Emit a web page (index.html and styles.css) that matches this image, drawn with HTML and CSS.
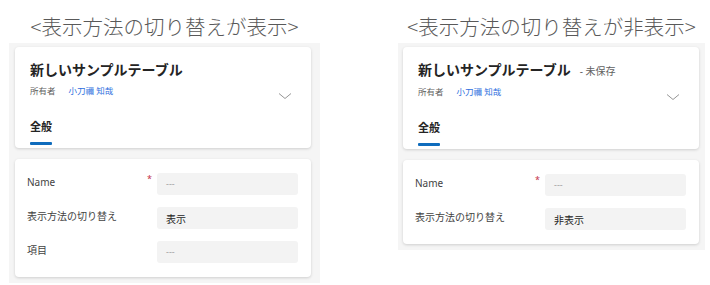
FILE: index.html
```html
<!DOCTYPE html>
<html lang="ja">
<head>
    <meta charset="UTF-8">
    <meta name="viewport" content="width=device-width, initial-scale=1.0">
    <title>表示方法の切り替え</title>
    <link rel="stylesheet" href="styles.css">
</head>
<body>
    <!-- 表示 -->
    <div class="column column-left">
        <h2 class="caption">&lt;表示方法の切り替えが表示&gt;</h2>
        <div class="panel">
            <div class="card head-card">
                <div class="head-top">
                    <div class="head-info">
                        <h1 class="record-title">新しいサンプルテーブル</h1>
                        <div class="owner-row">
                            <span class="owner-label">所有者</span>
                            <span class="owner-name">小刀禰 知哉</span>
                        </div>
                    </div>
                    <svg class="chevron" width="14" height="8" viewBox="0 0 14 8">
                        <path d="M1 1.5 L7 6.5 L13 1.5" fill="none" stroke="#8a8a8a" stroke-width="0.9"/>
                    </svg>
                </div>
                <div class="tabs">
                    <div class="tab tab-active">全般</div>
                </div>
            </div>
            <div class="card form-card">
                <div class="form-row">
                    <div class="field-label">Name <span class="required">*</span></div>
                    <div class="field-box placeholder">---</div>
                </div>
                <div class="form-row">
                    <div class="field-label">表示方法の切り替え</div>
                    <div class="field-box value">表示</div>
                </div>
                <div class="form-row">
                    <div class="field-label">項目</div>
                    <div class="field-box placeholder">---</div>
                </div>
            </div>
        </div>
    </div>

    <!-- 非表示 -->
    <div class="column column-right">
        <h2 class="caption">&lt;表示方法の切り替えが非表示&gt;</h2>
        <div class="panel">
            <div class="card head-card">
                <div class="head-top">
                    <div class="head-info">
                        <h1 class="record-title">新しいサンプルテーブル<span class="unsaved">- 未保存</span></h1>
                        <div class="owner-row">
                            <span class="owner-label">所有者</span>
                            <span class="owner-name">小刀禰 知哉</span>
                        </div>
                    </div>
                    <svg class="chevron" width="14" height="8" viewBox="0 0 14 8">
                        <path d="M1 1.5 L7 6.5 L13 1.5" fill="none" stroke="#8a8a8a" stroke-width="0.9"/>
                    </svg>
                </div>
                <div class="tabs">
                    <div class="tab tab-active">全般</div>
                </div>
            </div>
            <div class="card form-card">
                <div class="form-row">
                    <div class="field-label">Name <span class="required">*</span></div>
                    <div class="field-box placeholder">---</div>
                </div>
                <div class="form-row">
                    <div class="field-label">表示方法の切り替え</div>
                    <div class="field-box value">非表示</div>
                </div>
            </div>
        </div>
    </div>
</body>
</html>
```

FILE: styles.css
```css
body {
    margin: 0;
    padding: 0 0 0 9px;
    display: flex;
    gap: 78px;
    background: #ffffff;
    font-family: "Noto Sans", "Noto Sans CJK JP", sans-serif;
    color: #242424;
}

/* Columns */
.column {
    padding-top: 11px;
}

.column-left {
    width: 311px;
}

.column-right {
    width: 307px;
}

.caption {
    margin: 0 0 2px;
    height: 30px;
    line-height: 30px;
    font-size: 20.5px;
    font-weight: 300;
    color: #595959;
    text-align: center;
    white-space: nowrap;
    font-family: "Noto Sans CJK JP", sans-serif;
}

/* Gray background panel */
.panel {
    background: #f5f5f5;
    padding: 4px 9px 6px 6px;
    display: flex;
    flex-direction: column;
    gap: 11px;
}

.column-right .panel {
    padding: 4px 6px 6px 5px;
}

.card {
    background: #ffffff;
    border-radius: 4px;
    box-shadow: 0 1px 3px rgba(0, 0, 0, 0.16);
}

/* Header card */
.head-card {
    padding: 13px 19px 3px 15px;
}

.head-top {
    display: flex;
    justify-content: space-between;
}

.record-title {
    margin: 0;
    font-size: 14px;
    line-height: 20px;
    font-weight: 700;
    color: #242424;
    white-space: nowrap;
}

.unsaved {
    margin-left: 9px;
    font-size: 10px;
    font-weight: 400;
    color: #616161;
}

.owner-row {
    margin-top: 4px;
    display: flex;
    gap: 13px;
    font-size: 8.5px;
    line-height: 14px;
}

.owner-label {
    color: #616161;
}

.owner-name {
    color: #2f6fde;
}

.chevron {
    align-self: flex-end;
    margin-bottom: -2px;
}

.tabs {
    margin-top: 21px;
    display: flex;
}

.tab {
    font-size: 11px;
    line-height: 16px;
    font-weight: 600;
    color: #242424;
}

.tab-active::after {
    content: "";
    display: block;
    margin-top: 7px;
    height: 3px;
    border-radius: 1px;
    background: #0f6cbd;
}

/* Form card */
.form-card {
    padding: 14px 13px 14px 12px;
    display: flex;
    flex-direction: column;
    gap: 12px;
}

.form-row {
    display: grid;
    grid-template-columns: 1fr 141px;
    height: 22px;
}

.field-label {
    position: relative;
    font-size: 10px;
    line-height: 18px;
    color: #424242;
}

.required {
    position: absolute;
    right: 5px;
    top: -3px;
    font-size: 9px;
    color: #c4314b;
}

.field-box {
    background: #f3f3f3;
    border-radius: 3px;
    padding: 0 9px;
    font-size: 10px;
    line-height: 22px;
}

.field-box.placeholder {
    color: #a0a0a0;
    font-size: 9px;
}

.field-box.value {
    padding-top: 3px;
    line-height: 19px;
    color: #242424;
}
```
